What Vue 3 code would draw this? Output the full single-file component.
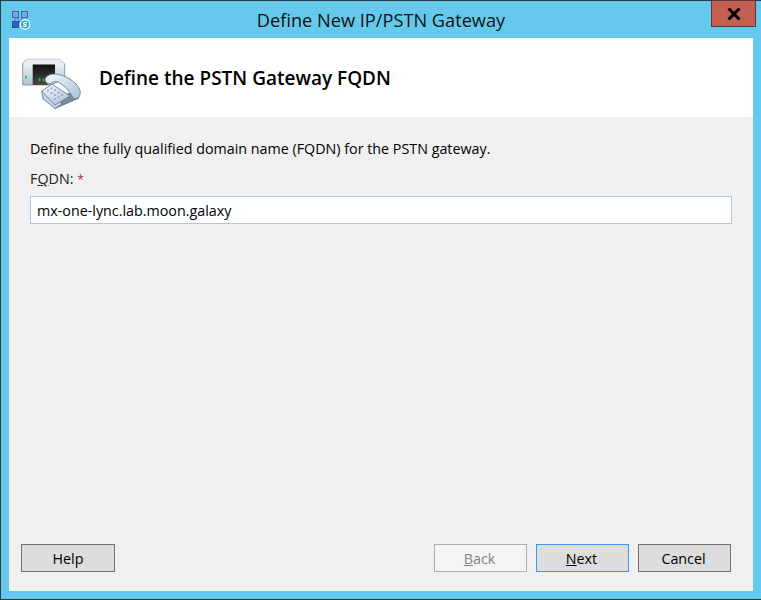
<template>
  <div class="window">
    <div class="titlebar">
      <div class="title-left">
        <svg class="app-icon" width="20" height="20" viewBox="0 0 20 20">
          <path d="M4 5 L9 12 L14 5 M4 5 V13" stroke="#5a76b8" stroke-width="1.2" fill="none" />
          <rect x="1.5" y="1.5" width="6" height="6" fill="#7ea3e6" stroke="#3f66b4" />
          <rect x="10.5" y="1.5" width="6" height="6" fill="#7ea3e6" stroke="#3f66b4" />
          <rect x="1.5" y="11.5" width="6" height="6" fill="#2f60c4" stroke="#24509f" />
          <circle cx="14" cy="14.5" r="5.4" fill="#e8f6fd" />
          <circle cx="14" cy="14.5" r="4" fill="#2e9fdc" />
          <path d="M16 12.9 Q14 11.8 12.8 13 Q12.4 14.4 14 14.5 Q15.7 14.8 15.2 16 Q14 17 12 16" stroke="#fff" stroke-width="1.2" fill="none" />
        </svg>
      </div>
      <div class="title">{{ title }}</div>
      <div class="title-right">
        <button class="close-btn" aria-label="Close">
          <svg width="14" height="12" viewBox="0 0 14 12">
            <path d="M1.5 0.5 L12.5 11.5 M12.5 0.5 L1.5 11.5" stroke="#000" stroke-width="3" fill="none" />
          </svg>
        </button>
      </div>
    </div>

    <div class="client">
      <div class="header">
        <!-- viewBox uses page coordinates so the icon parts line up with the reference -->
        <svg class="header-icon" width="62" height="62" viewBox="21 46 62 62">
          <defs>
            <linearGradient id="case" x1="0" y1="0" x2="0" y2="1">
              <stop offset="0" stop-color="#f6f9fb" />
              <stop offset="1" stop-color="#b4c3d1" />
            </linearGradient>
            <linearGradient id="slot" x1="0" y1="0" x2="0" y2="1">
              <stop offset="0" stop-color="#111" />
              <stop offset="1" stop-color="#484848" />
            </linearGradient>
            <linearGradient id="phone" x1="0" y1="0" x2="1" y2="1">
              <stop offset="0" stop-color="#f5f9fc" />
              <stop offset="1" stop-color="#a8c0d6" />
            </linearGradient>
          </defs>
          <path d="M22.7 62 L26.7 58.3 H60 L64.7 63 V78 L50 84 H22.7 Z" fill="url(#case)" stroke="#77838e" stroke-width="0.8" />
          <path d="M26.7 58.3 H60 L64.7 63 H22.7 Z" fill="#e6ecf1" />
          <path d="M32.7 63.5 H55 V78 L47 84 H32.7 Z" fill="url(#slot)" />
          <rect x="25" y="74.5" width="2" height="3" fill="#2fd04a" />
          <rect x="38.5" y="77" width="2" height="3" fill="#2cab48" />
          <rect x="42.5" y="77.5" width="2" height="3" fill="#2cab48" />
          <path d="M55 107.5 L62 94 L72 92 L79 97 Z" fill="#7d8b98" stroke="#5a6773" stroke-width="0.8" />
          <path d="M41.7 90 L43 98 L55 107.5 L62 103 L57 96 Z" fill="#c4d6e6" stroke="#5d7085" stroke-width="0.8" />
          <path d="M41.7 90 L52 83 L70 95 L55 104 Z" fill="url(#phone)" stroke="#60748a" stroke-width="0.8" />
          <g fill="#8ea3b8">
            <circle cx="48" cy="89.5" r="1" /><circle cx="51.5" cy="87.3" r="1" /><circle cx="55" cy="89" r="1" />
            <circle cx="51.5" cy="92" r="1" /><circle cx="55" cy="94" r="1" /><circle cx="58.5" cy="91.5" r="1" />
            <circle cx="55" cy="98" r="1" /><circle cx="58.5" cy="96" r="1" /><circle cx="62" cy="94" r="1" />
          </g>
          <path d="M45 78 C46 75 50 73 55 73 C62 73 71 78 76 83 C79 86 81 90 80 93 C80 97 76 99 73 97 C72 95 71 93 70 92 C68 88 64 85 60 82 C57 80 54 80 52 82 C49 84 45 82 45 78 Z" fill="url(#phone)" stroke="#60748a" stroke-width="0.8" />
        </svg>
        <h1>Define the PSTN Gateway FQDN</h1>
      </div>

      <div class="body">
        <p class="intro">Define the fully qualified domain name (FQDN) for the PSTN gateway.</p>
        <label class="field-label" for="fqdn">F<u>Q</u>DN: <span class="req">*</span></label>
        <input id="fqdn" type="text" v-model="fqdn" />
      </div>

      <div class="footer">
        <button class="btn help">Help</button>
        <div class="nav-buttons">
          <button class="btn" disabled><u>B</u>ack</button>
          <button class="btn focused"><u>N</u>ext</button>
          <button class="btn">Cancel</button>
        </div>
      </div>
    </div>
  </div>
</template>

<script setup>
import { ref } from 'vue'

const title = 'Define New IP/PSTN Gateway'
const fqdn = ref('mx-one-lync.lab.moon.galaxy')
</script>

<style scoped>
.window {
  width: 761px;
  height: 600px;
  box-sizing: border-box;
  display: flex;
  flex-direction: column;
  background: #65c9ed;
  border: 1px solid #2e3a42;
  border-right: none;
  font-family: "Open Sans", "Noto Sans", sans-serif;
  color: #000;
}

.titlebar {
  height: 37px;
  flex: none;
  display: grid;
  grid-template-columns: 1fr auto 1fr;
}

.title-left {
  padding: 9px 0 0 10px;
}

.app-icon {
  display: block;
}

.title {
  font-size: 18.2px;
  line-height: 38px;
  color: #111;
}

.title-right {
  display: flex;
  justify-content: flex-end;
  align-items: flex-start;
  padding-right: 5px;
}

.close-btn {
  width: 45px;
  height: 27px;
  margin-top: -1px;
  padding: 0;
  border: 1px solid #5c3a36;
  background: #c45d52;
  display: flex;
  align-items: center;
  justify-content: center;
}

.client {
  flex: 1;
  margin: 0 8px 8px 8px;
  background: #f0f0f0;
  display: flex;
  flex-direction: column;
  min-height: 0;
}

.header {
  height: 79px;
  flex: none;
  box-sizing: border-box;
  background: #fff;
  display: flex;
  align-items: center;
  padding-left: 12px;
  gap: 16px;
}

.header-icon {
  flex: none;
}

h1 {
  margin: 0;
  font-size: 19px;
  font-weight: 600;
}

.body {
  flex: 1;
  padding: 22px 21px 0 21px;
  display: flex;
  flex-direction: column;
  font-size: 14.3px;
}

.intro {
  margin: 0;
  line-height: 20px;
}

.field-label {
  margin-top: 10px;
  height: 20px;
  line-height: 20px;
  color: #222;
}

.req {
  color: #b5223c;
  font-size: 12px;
}

input {
  margin-top: 7px;
  width: 702px;
  height: 28px;
  box-sizing: border-box;
  padding: 0 6px;
  border: 1px solid #a9c8e6;
  background: #fff;
  font: inherit;
  color: #000;
  outline: none;
}

.footer {
  display: flex;
  justify-content: space-between;
  padding: 0 22px 19px 12px;
}

.nav-buttons {
  display: flex;
  gap: 9px;
}

.btn {
  width: 93px;
  height: 28px;
  padding: 0 2px 0 0;
  box-sizing: border-box;
  border: 1px solid #707070;
  background: #dddddd;
  font-family: inherit;
  font-size: 14.3px;
  color: #000;
}

.btn.help {
  width: 94px;
  padding: 0;
}

.btn:disabled {
  border-color: #adadad;
  background: #f4f4f4;
  color: #838383;
}

.btn.focused {
  border-color: #3c97ee;
}
</style>

<style>
html,
body {
  margin: 0;
  overflow: hidden;
}
</style>
